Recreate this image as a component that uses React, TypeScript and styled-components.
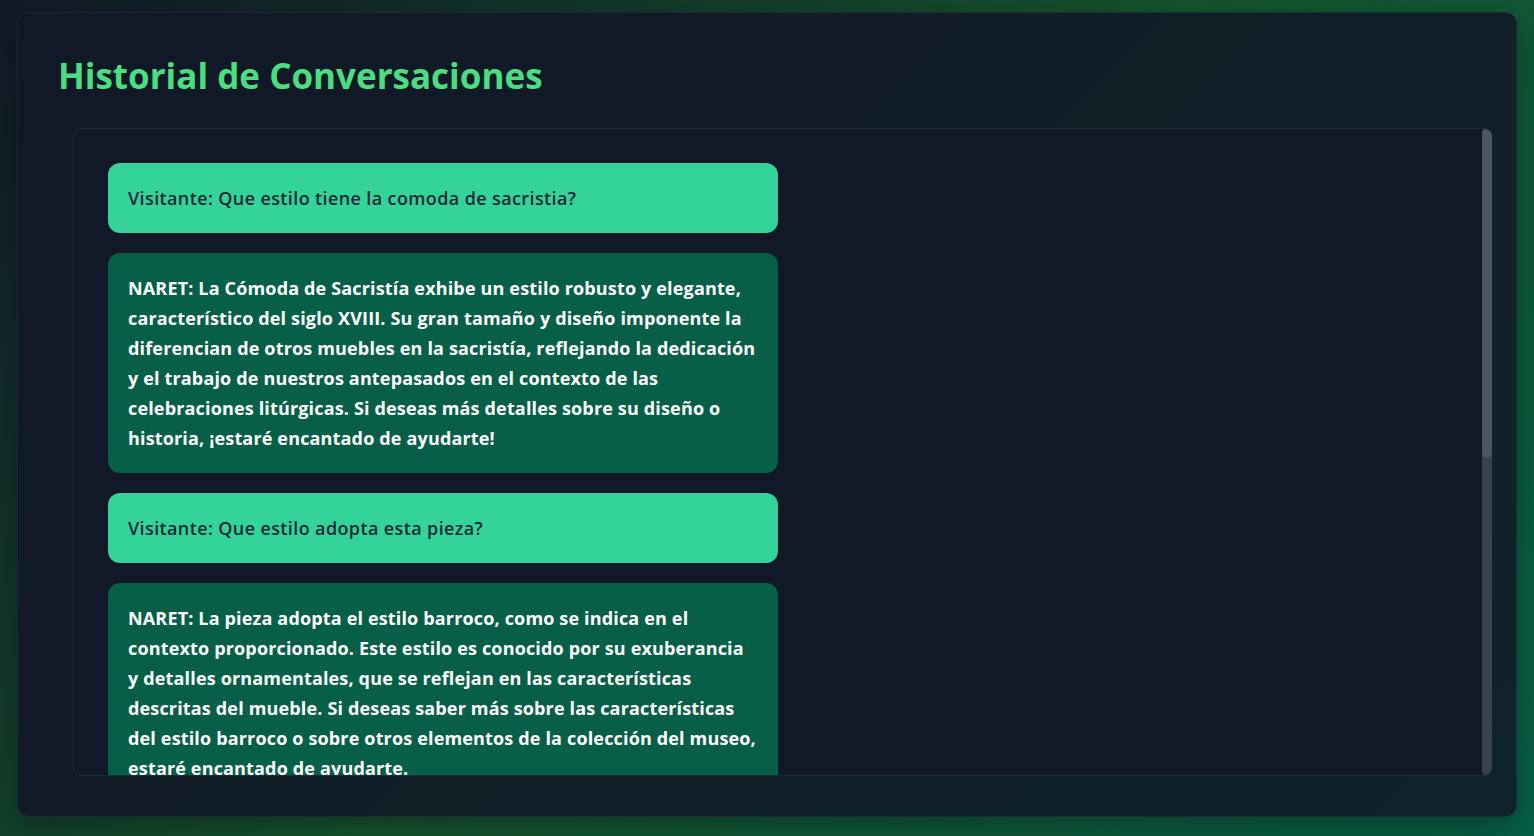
import React from 'react'
import styled, { createGlobalStyle } from 'styled-components'

const GlobalStyle = createGlobalStyle`
  * { box-sizing: border-box; }
  html, body { margin: 0; padding: 0; height: 100%; }
  body {
    font-family: "Open Sans", "Noto Sans", "Liberation Sans", sans-serif;
    background: linear-gradient(135deg, #111827 0%, #14532d 50%, #065f46 100%);
    background-attachment: fixed;
    overflow: hidden;
  }
`

type Message = { from: 'user' | 'bot'; text: string }

const messages: Message[] = [
  { from: 'user', text: 'Visitante: Que estilo tiene la comoda de sacristia?' },
  {
    from: 'bot',
    text:
      'NARET: La Cómoda de Sacristía exhibe un estilo robusto y elegante, característico del siglo XVIII. Su gran tamaño y diseño imponente la diferencian de otros muebles en la sacristía, reflejando la dedicación y el trabajo de nuestros antepasados en el contexto de las celebraciones litúrgicas. Si deseas más detalles sobre su diseño o historia, ¡estaré encantado de ayudarte!',
  },
  { from: 'user', text: 'Visitante: Que estilo adopta esta pieza?' },
  {
    from: 'bot',
    text:
      'NARET: La pieza adopta el estilo barroco, como se indica en el contexto proporcionado. Este estilo es conocido por su exuberancia y detalles ornamentales, que se reflejan en las características descritas del mueble. Si deseas saber más sobre las características del estilo barroco o sobre otros elementos de la colección del museo, estaré encantado de ayudarte.',
  },
]

// share of the track taken by the thumb, as in the scrolled list
const thumbShare = 0.51

function App() {
  return (
    <Page>
      <GlobalStyle />
      <Card>
        <Title>Historial de Conversaciones</Title>
        <ScrollBox>
          <List>
            {messages.map((m, i) => (
              <Bubble key={i} $bot={m.from === 'bot'}>
                {m.text}
              </Bubble>
            ))}
          </List>
          <Track>
            <Thumb style={{ height: `${thumbShare * 100}%` }} />
          </Track>
        </ScrollBox>
      </Card>
    </Page>
  )
}

export default App

const Page = styled.div`
  height: 100vh;
  padding: 12px 17px 19px 17px;
  display: flex;
`

const Card = styled.div`
  flex: 1;
  display: flex;
  flex-direction: column;
  min-height: 0;
  background: linear-gradient(135deg, rgba(17, 24, 39, 0.93), rgba(17, 24, 39, 0.84));
  border: 1px solid rgba(55, 65, 81, 0.35);
  border-radius: 12px;
  box-shadow: 0 10px 30px rgba(0, 0, 0, 0.3);
  padding: 43px 24px 40px 40px;
`

const Title = styled.h1`
  margin: 0 0 32px 0;
  font-size: 35px;
  line-height: 40px;
  font-weight: 700;
  color: #4ade80;
`

const ScrollBox = styled.div`
  flex: 1;
  min-height: 0;
  margin-left: 15px;
  display: flex;
  background: #111827;
  border: 1px solid #1f2937;
  border-right: none;
  border-radius: 8px;
  overflow: hidden;
`

const List = styled.div`
  flex: 1;
  min-width: 0;
  display: flex;
  flex-direction: column;
  gap: 20px;
  padding: 34px;
  overflow: hidden;
`

const Track = styled.div`
  width: 10px;
  flex-shrink: 0;
  margin-top: -1px;
  margin-bottom: -1px;
  background: #374151;
  border-radius: 5px;
  display: flex;
  flex-direction: column;
`

const Thumb = styled.div`
  width: 100%;
  background: #4b5563;
  border-radius: 5px;
`

const Bubble = styled.div<{ $bot?: boolean }>`
  width: 50%;
  flex-shrink: 0;
  padding: 20px;
  border-radius: 12px;
  font-size: 18px;
  line-height: 30px;
  font-weight: ${(p) => (p.$bot ? 700 : 600)};
  letter-spacing: ${(p) => (p.$bot ? '0.16px' : '0.38px')};
  background: ${(p) => (p.$bot ? '#065f46' : '#34d399')};
  color: ${(p) => (p.$bot ? '#ffffff' : '#1f2937')};
`
